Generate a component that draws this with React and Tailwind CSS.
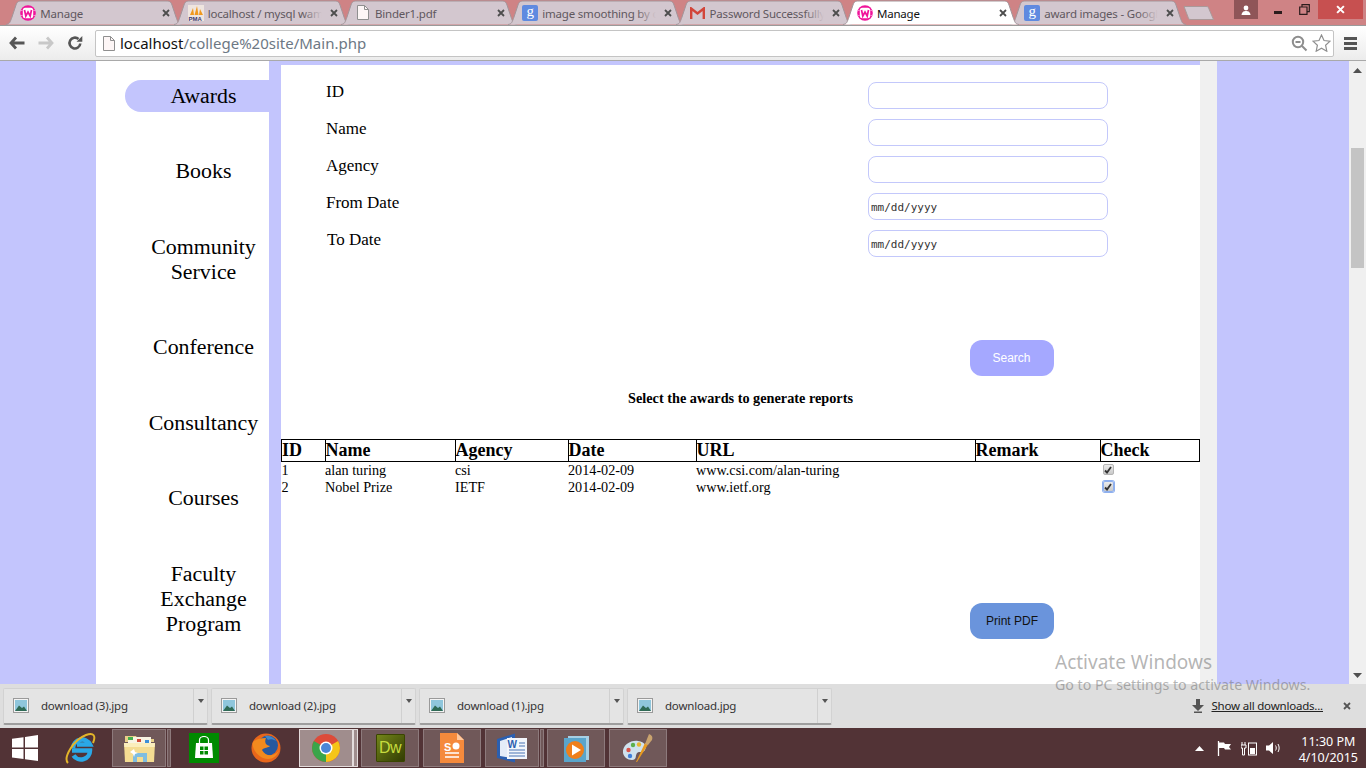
import React from "react";

const UI = "font-['Noto_Sans',sans-serif]";
const SERIF = "font-['Liberation_Serif',serif]";

function Wamp() {
  return (
    <svg width="16" height="16" viewBox="0 0 16 16" className="shrink-0">
      <circle cx="8" cy="8" r="7.800" fill="#f0149a" />
      <path d="M0 5.500h2.500M0 10.500h2.500M13.500 5.500H16M13.500 10.500H16" stroke="#f9a0d8" strokeWidth=".8" />
      <rect x="2.800" y="2.800" width="10.400" height="10.400" rx="2.500" fill="#fff" />
      <path d="M4.500 5 L5.800 11 L8 7 L10.200 11 L11.500 5" fill="none" stroke="#f0149a" strokeWidth="1.700" />
    </svg>
  );
}
function Pma() {
  return (
    <svg width="16" height="16" viewBox="0 0 16 16" className="shrink-0">
      <rect width="16" height="16" fill="#efe5df" />
      <path d="M2 10 L5 3 L6 10Z M6.500 10 L9 1 L10.500 10Z M11 10 L12 4 L15 10Z" fill="#f0991f" />
      <text x="0.500" y="15.500" fontSize="6" fontWeight="700" fill="#3a3a70" fontFamily="Liberation Sans">PMA</text>
    </svg>
  );
}
function Doc() {
  return (
    <svg width="12" height="15" viewBox="0 0 12 15" className="shrink-0">
      <path d="M.5.5h7l4 4v10H.5z" fill="#fdf6f6" stroke="#8f8f8f" />
      <path d="M7.500.5v4h4" fill="none" stroke="#8f8f8f" />
    </svg>
  );
}
function G() {
  return (
    <span className="w-4 h-4 shrink-0 rounded-[2px] bg-[#5f8ae0] text-white flex items-center justify-center text-[15px] leading-none pb-[2px] font-['Liberation_Serif',serif]">g</span>
  );
}
function Gmail() {
  return (
    <svg width="15" height="12" viewBox="0 0 15 12" className="shrink-0">
      <path d="M1.200 12V1.500L7.500 6.500 13.800 1.500V12" fill="none" stroke="#d2453a" strokeWidth="2.400" />
    </svg>
  );
}
function CloseX({ color = "#4d4d4d", size = 8 }) {
  return (
    <svg width={size} height={size} viewBox="0 0 8 8" className="shrink-0">
      <path d="M1 1l6 6M7 1L1 7" stroke={color} strokeWidth="1.800" />
    </svg>
  );
}

function Tab({ icon, title, active }) {
  return (
    <div className={`relative w-[167.330px] h-[25px] shrink-0 ${active ? "z-10" : ""}`}>
      <svg width="176" height="25" viewBox="0 0 176 25" className="absolute left-0 top-0">
        <path
          d="M0 24.500 C4 24 4 22 6 17 L10 5 C11 2 12 1 16 1 H160 C164 1 165 2 166 5 L170 17 C172 22 172 24 176 24.500"
          fill={active ? "#ffffff" : "#d3c7cf"}
          stroke="#a3959a"
          strokeWidth="1"
        />
      </svg>
      <div className="relative h-full flex items-center pl-[14px]">
        <div className="w-4 flex items-center justify-center shrink-0">{icon}</div>
        <div className="relative ml-[4px] -mt-[1px] w-[114px] h-[17px] leading-[16px] overflow-hidden whitespace-nowrap">
          <span className={`text-[11.500px] tracking-[-0.2px] ${UI} ${active ? "text-[#111]" : "text-[#5f575e]"}`}>{title}</span>
          {!active && <span className="absolute right-0 top-0 bottom-0 w-5 bg-gradient-to-r from-transparent to-[#d3c7cf]" />}
        </div>
        <div className="ml-[8px]"><CloseX /></div>
      </div>
    </div>
  );
}

function TabStrip() {
  return (
    <div className="relative h-[25px] bg-[#cf8385] flex items-start shrink-0">
      <div className="flex pl-[6.300px]">
        <Tab icon={<Wamp />} title="Manage" />
        <Tab icon={<Pma />} title="localhost / mysql wamp" />
        <Tab icon={<Doc />} title="Binder1.pdf" />
        <Tab icon={<G />} title="image smoothing by css" />
        <Tab icon={<Gmail />} title="Password Successfully" />
        <Tab icon={<Wamp />} title="Manage" active />
        <Tab icon={<G />} title="award images - Google" />
        <svg width="32" height="16" viewBox="0 0 32 16" className="ml-[5px] mt-[5px] shrink-0">
          <path d="M1 1.500 H23 C25 1.500 25.500 2 26 4 L30.500 14.500 H8 C6 14.500 5.500 14 5 12Z" fill="#d3c7cf" stroke="#a99" />
        </svg>
      </div>
      <div className="ml-auto flex items-start">
        <div className="w-[24px] h-[19px] bg-[#8f5558] flex items-center justify-center">
          <svg width="10" height="10" viewBox="0 0 10 10"><circle cx="5" cy="3" r="2.400" fill="#fff" /><path d="M0.500 10C1 6.500 3 6 5 6s4 .5 4.500 4z" fill="#fff" /></svg>
        </div>
        <div className="w-[40px] h-[19px] flex items-center justify-center pt-[5px]">
          <div className="w-2 h-[3px] bg-[#2c1c1c]" />
        </div>
        <div className="w-[12px] h-[19px] flex items-center justify-center">
          <svg width="11" height="11" viewBox="0 0 11 11"><path d="M3 2.500V.7h7.300v7H8.500M.7 3h7.300v7.300H.7z" fill="none" stroke="#2c1c1c" strokeWidth="1.200" /></svg>
        </div>
        <div className="w-[45px] h-[19px] ml-[8px] mr-[3px] bg-[#c75050] flex items-center justify-center">
          <CloseX color="#fff" size={9} />
        </div>
      </div>
    </div>
  );
}

function Toolbar() {
  return (
    <div className="h-[36px] shrink-0 flex items-center bg-gradient-to-b from-[#ffffff] to-[#ececec] border-t border-[#9a9a9a] border-b border-b-[#a9a9a9]">
      <div className="w-[95px] shrink-0 flex items-center pl-[9px]">
        <svg width="16" height="14" viewBox="0 0 16 14"><path d="M7 1.500 2 7l5 5.500M2.500 7H15.500" fill="none" stroke="#555" strokeWidth="2.800" /></svg>
        <svg width="16" height="14" viewBox="0 0 16 14" className="ml-[13px]"><path d="M9 1.500 14 7l-5 5.500M13.500 7H.5" fill="none" stroke="#c8c8c8" strokeWidth="2.800" /></svg>
        <svg width="16" height="16" viewBox="0 0 16 16" className="ml-[13px]"><path d="M13.300 8.500A5.400 5.400 0 1 1 11.500 4" fill="none" stroke="#555" strokeWidth="2.600" /><path d="M9.500 6.800H15.300V1z" fill="#555" /></svg>
      </div>
      <div className="w-[1239px] h-[27px] shrink-0 bg-white border border-[#c4c4c4] rounded-[2px] flex items-center pl-[7px] pr-[2px]">
        <Doc />
        <span className={`ml-[5px] text-[15px] ${UI}`}>
          <span className="text-[#111]">localhost</span><span className="text-[#6d7884]">/college%20site/Main.php</span>
        </span>
        <svg width="17" height="17" viewBox="0 0 17 17" className="ml-auto"><circle cx="7" cy="7" r="5.200" fill="none" stroke="#8e8e8e" strokeWidth="2" /><path d="M4.500 7h5M11 11l4.500 4.500" stroke="#8e8e8e" strokeWidth="2" /></svg>
        <svg width="19" height="18" viewBox="0 0 19 18" className="ml-[4px]"><path d="M9.500 1l2.500 5.500 6 .7-4.400 4 1.200 6-5.300-3-5.300 3 1.200-6L1 7.200l6-.7z" fill="#fff" stroke="#8e8e8e" strokeWidth="1.200" /></svg>
      </div>
      <div className="flex-1 flex flex-col items-center gap-[2px]">
        <div className="w-[13px] h-[3px] bg-[#555]" /><div className="w-[13px] h-[3px] bg-[#555]" /><div className="w-[13px] h-[3px] bg-[#555]" />
      </div>
    </div>
  );
}

function Sidebar() {
  const items = [["Community", "Service"], ["Conference"], ["Consultancy"], ["Courses"], ["Faculty", "Exchange", "Program"]];
  return (
    <div className={`w-[173px] shrink-0 bg-white pt-[22.500px] pl-[29px] ${SERIF} text-[21.900px] leading-[25px] text-black`}>
      <div className="flex flex-col gap-[50.500px] text-center">
        <div className="-my-[3.500px] py-[3.500px] pl-[13px] rounded-l-[16px] bg-[#c3c5fd]"><span className="block -mt-[1px] mb-[1px]">Awards</span></div>
        <div className="pl-[13px] -mt-[1px] mb-[1px]">Books</div>
        {items.map((lines) => (
          <div key={lines[0]} className="pl-[13px] -mt-[1px] mb-[1px]">
            {lines.map((l) => <div key={l}>{l}</div>)}
          </div>
        ))}
      </div>
    </div>
  );
}

const inputCls = "w-[240px] h-[27px] bg-white border border-[#c3c8fb] rounded-[8px] outline-none px-[2px] text-[11px] text-[#333] font-['DejaVu_Sans_Mono',monospace]";

function FormRow({ label, date, labelPad = "pl-[45px]" }) {
  return (
    <div className="flex items-start h-[27px]">
      <div className={`w-[587px] ${labelPad} text-[17px] leading-[20px] text-black`}>{label}</div>
      {date ? <input readOnly defaultValue="mm/dd/yyyy" className={`${inputCls} pt-[1px]`} /> : <input readOnly className={inputCls} />}
    </div>
  );
}

function Check({ focused }) {
  return (
    <span className={`w-[11px] h-[11px] flex items-center justify-center rounded-[2px] border bg-gradient-to-b from-[#ececec] to-[#c9c9c9] ${focused ? "border-[#8fb0ee] ring-1 ring-[#8fb0ee]" : "border-[#b5b5b5]"}`}>
      <svg width="8" height="8" viewBox="0 0 8 8"><path d="M1 4.500 3 6.500 7 1" fill="none" stroke="#333" strokeWidth="1.800" /></svg>
    </span>
  );
}

function DataTable() {
  const cols = ["w-[44px]", "w-[130px]", "w-[113px]", "w-[128px]", "w-[279px]", "w-[125px]", "w-[99px]"];
  const head = ["ID", "Name", "Agency", "Date", "URL", "Remark", "Check"];
  const rows = [
    ["1", "alan turing", "csi", "2014-02-09", "www.csi.com/alan-turing", "", false],
    ["2", "Nobel Prize", "IETF", "2014-02-09", "www.ietf.org", "", true],
  ];
  return (
    <table className="table-fixed w-[919px] border-collapse text-black">
      <colgroup>{cols.map((c, i) => <col key={i} className={c} />)}</colgroup>
      <thead>
        <tr>
          {head.map((h, i) => <th key={h} className={`border border-black text-left p-0 text-[18px] leading-[21px] font-bold ${i > 0 ? "indent-[-0.5px]" : ""}`}>{h}</th>)}
        </tr>
      </thead>
      <tbody>
        {rows.map((r) => (
          <tr key={r[0]} className="h-[17px]">
            {r.slice(0, 6).map((c, i) => <td key={i} className={`p-0 text-[14.200px] leading-[16px] ${i > 0 ? "indent-[-0.5px]" : ""}`}>{c}</td>)}
            <td className="p-0 pl-[2px] pb-[1px]"><Check focused={r[6]} /></td>
          </tr>
        ))}
      </tbody>
    </table>
  );
}

function Main() {
  return (
    <div className={`w-[919px] shrink-0 bg-white border-t-[4px] border-[#c3c5fd] rounded-t-[3px] ${SERIF}`}>
      <div className="pt-[17px] flex flex-col gap-[10px]">
        <FormRow label="ID" />
        <FormRow label="Name" />
        <FormRow label="Agency" />
        <FormRow label="From Date" date />
        <FormRow label="To Date" date labelPad="pl-[46px]" />
      </div>
      <div className="mt-[83px] pl-[689px]">
        <button className="w-[84px] h-[36px] rounded-[12px] bg-[#a5a8ff] text-white text-[12px] pr-[1px] font-['Liberation_Sans',sans-serif]">Search</button>
      </div>
      <div className="mt-[14px] text-center text-[14.250px] leading-[16px] font-bold text-black">Select the awards to generate reports</div>
      <div className="mt-[33px]"><DataTable /></div>
      <div className="mt-[107px] pl-[689px]">
        <button className="w-[84px] h-[36px] rounded-[12px] bg-[#6a94dc] text-[#111] text-[12px] font-['Liberation_Sans',sans-serif]">Print PDF</button>
      </div>
    </div>
  );
}

function Scrollbar() {
  return (
    <div className="w-[17px] shrink-0 bg-[#f0f0f0] flex flex-col items-center">
      <svg width="9" height="5" viewBox="0 0 9 5" className="mt-[7px]"><path d="M4.500 0 9 5H0z" fill="#505050" /></svg>
      <div className="w-[13px] h-[120px] mt-[75px] bg-[#c4c4c4]" />
      <svg width="9" height="5" viewBox="0 0 9 5" className="mt-auto mb-[6px]"><path d="M4.500 5 9 0H0z" fill="#505050" /></svg>
    </div>
  );
}

function Download({ name }) {
  return (
    <div className="w-[205px] h-[37px] shrink-0 flex items-stretch rounded-[2px] bg-[#e4e4e4] border border-[#d2d2d2] border-b-[#9e9e9e] border-b-2">
      <div className="flex-1 flex items-center pl-[9px]">
        <svg width="16" height="15" viewBox="0 0 16 15"><rect x=".5" y=".5" width="15" height="14" fill="#f4f4f4" stroke="#9a9a9a" /><rect x="2" y="2" width="12" height="11" fill="#8fc6dc" /><path d="M2 13 L6 7.500 9 10 11 8.500 14 13z" fill="#2f6a55" /></svg>
        <span className={`ml-[12px] text-[11.500px] tracking-[-0.2px] text-[#333] ${UI}`}>{name}</span>
      </div>
      <div className="w-[14px] border-l border-[#d0d0d0] flex justify-center pt-[10px]">
        <svg width="6" height="4" viewBox="0 0 6 4"><path d="M0 0h6L3 4z" fill="#555" /></svg>
      </div>
    </div>
  );
}

function DownloadBar() {
  return (
    <div className="h-[44px] shrink-0 bg-[#dedede] flex items-center pl-[3px] gap-[3px]">
      <Download name="download (3).jpg" />
      <Download name="download (2).jpg" />
      <Download name="download (1).jpg" />
      <Download name="download.jpg" />
      <div className="ml-auto flex items-center pr-[15px]">
        <svg width="12" height="14" viewBox="0 0 12 14"><path d="M4 0h4v6h4L6 12 0 6h4z" fill="#555" /><rect x="2" y="12.500" width="8" height="1.500" fill="#555" /></svg>
        <span className={`ml-[7px] text-[11.500px] tracking-[-0.2px] text-[#222] underline ${UI}`}>Show all downloads...</span>
        <span className="ml-[20px]"><CloseX color="#555" size={8} /></span>
      </div>
    </div>
  );
}

const Box = ({ w, children, stub }) => (
  <div className="flex h-[38px] shrink-0">
    <div className="h-full border border-[#8d7a7c] bg-[#705859] flex items-center justify-center" style={{ width: w }}>{children}</div>
    {stub && <div className="w-[4px] ml-[1px] h-full border border-[#8d7a7c] bg-[#705859]" />}
  </div>
);

function Taskbar() {
  return (
    <div className={`h-[40px] shrink-0 bg-[#523336] flex items-center pl-[12px] text-white ${UI}`}>
      <svg width="26" height="26" viewBox="0 0 26 26" className="shrink-0"><path d="M0 3.700 11.500 2.200V12.500H0zM13 2 26 0V12.500H13zM0 14H11.500V24L0 22.500zM13 14H26V26L13 24.200z" fill="#fff" /></svg>
      <svg width="32" height="34" viewBox="0 0 32 34" className="ml-[27px] shrink-0">
        <path d="M8 17a9 9 0 0 1 17-3.500H12M7 19.500h18a9 9 0 0 1-16.500 5" fill="none" stroke="#2aa8e6" strokeWidth="4.500" />
        <path d="M3 32C-2 27 8 9 21 4c8-3 10 1 7 8" fill="none" stroke="#e3b52a" strokeWidth="2" />
      </svg>
      <div className="ml-[15px]"><Box w={54} stub>
        <svg width="31" height="29" viewBox="0 0 31 29">
          <path d="M1 2h11l2 3h16v3H1z" fill="#e8cf87" />
          <rect x="4" y="3" width="23" height="7" fill="#f8f4e2" />
          <rect x="4" y="3" width="5" height="3" fill="#45b04d" />
          <rect x="13" y="5" width="4" height="3" fill="#d24a38" />
          <rect x="21" y="6" width="4" height="3" fill="#3d8fd8" />
          <path d="M0 9h31l-1 19H1z" fill="#f4dc92" />
          <path d="M0 9h31l-.3 4H.3z" fill="#fbeebc" />
          <path d="M9 28v-9h14v9h-4v-5h-6v5z" fill="#7fbde0" />
          <path d="M6 18l4-3 1 3 3 1-3 1-1 3-1-3z" fill="#fff" />
        </svg>
      </Box></div>
      <div className="ml-[18px] w-[30px] h-[30px] shrink-0 bg-[#008a00] flex items-center justify-center">
        <svg width="20" height="24" viewBox="0 0 20 24"><path d="M5.500 7V4a4.500 3.500 0 0 1 9 0v3" fill="none" stroke="#fff" strokeWidth="1.200" /><path d="M2 7h16l1 15H1z" fill="#fff" /><path d="M6 10.500h3.500V14H6zM10.500 10.500H14V14h-3.500zM6 15h3.500v3.500H6zM10.500 15H14v3.500h-3.500z" fill="#008a00" /></svg>
      </div>
      <svg width="30" height="30" viewBox="0 0 30 30" className="ml-[32px] shrink-0">
        <circle cx="15" cy="15" r="14.500" fill="#e8661b" />
        <circle cx="17" cy="12.500" r="10" fill="#27589f" />
        <path d="M14 3c4-1 9 1 11 5-3-2-6-2-8-1z" fill="#3f86c8" />
        <path d="M1.500 10C2 25 23 34 28.500 16 26 23 15 25 11 17c2-3 7-2 8-4-4-1-6-3-4-8C9 5 4 6 1.500 10z" fill="#f28a1e" />
      </svg>
      <div className="ml-[18px]"><div className="flex h-[38px] shrink-0">
        <div className="w-[54px] h-full border border-[#e4dcdc] bg-[#a08d8d] flex items-center justify-center">
          <svg width="30" height="30" viewBox="0 0 30 30">
            <circle cx="15" cy="15" r="14" fill="#dd4b39" />
            <path d="M15 15 L27.100 8 A14 14 0 0 1 15 29z" fill="#f5c518" />
            <path d="M15 15 L15 29 A14 14 0 0 1 2.900 8z" fill="#3aa54a" />
            <circle cx="15" cy="15" r="6.500" fill="#fff" /><circle cx="15" cy="15" r="5" fill="#4a86d8" />
          </svg>
        </div>
        <div className="w-[5px] h-full border border-[#e4dcdc] bg-[#a08d8d]" />
      </div></div>
      <div className="ml-[3px]"><Box w={58}>
        <div className="w-[29px] h-[28px] rounded-[1px] border border-[#3a4500] bg-gradient-to-br from-[#74861a] to-[#333d04] flex items-center justify-center text-[16px] tracking-[-0.5px] text-[#c6db3e] font-['Liberation_Sans',sans-serif]">Dw</div>
      </Box></div>
      <div className="ml-[4px]"><Box w={58}>
        <svg width="24" height="30" viewBox="0 0 24 30"><path d="M0 0h17l7 7v23H0z" fill="#f58a3c" /><path d="M17 0l7 7h-7z" fill="#ffc79c" /><path d="M5 20h14M5 24h14" stroke="#fff" strokeWidth="1.500" /><circle cx="16" cy="13" r="3.500" fill="#fff" /><text x="4" y="17.500" fontSize="11" fontWeight="700" fill="#fff" fontFamily="Liberation Sans">S</text></svg>
      </Box></div>
      <div className="ml-[4px]"><Box w={54} stub>
        <svg width="32" height="30" viewBox="0 0 32 30"><path d="M1 6 19 .5v29L1 25z" fill="#2b5fb0" /><path d="M4 8 16 4v21L4 23z" fill="#e4ecf8" /><rect x="11" y="5" width="20" height="21" fill="#f3f6fb" /><path d="M23 10h6M23 13h6M13 17h16M13 20h16M13 23h16" stroke="#4a75b5" strokeWidth="1.200" /><text x="11.500" y="15" fontSize="10" fontWeight="700" fill="#2b5fb0" fontFamily="Liberation Sans">W</text></svg>
      </Box></div>
      <div className="ml-[3px]"><Box w={58}>
        <svg width="27" height="27" viewBox="0 0 27 27"><rect x="5" y="1" width="21" height="24" fill="#a6cfe4" /><rect x="1" y="3" width="22" height="24" fill="#5aa5cb" /><circle cx="12" cy="15" r="9" fill="#ef7f1a" /><path d="M9 9.500 18 15l-9 5.500z" fill="#fff" /></svg>
      </Box></div>
      <div className="ml-[4px]"><Box w={58}>
        <svg width="32" height="30" viewBox="0 0 32 30"><path d="M1 20C0 12 9 7 16 8c7 1 9 5 7 9-2 3-6 1-8 3-2 3 0 7-5 7-5 0-8-3-9-7z" fill="#cfe2ee" /><circle cx="6.500" cy="17" r="2.200" fill="#d9534a" /><circle cx="11" cy="12" r="2.200" fill="#5cb04d" /><circle cx="17" cy="11.500" r="2.200" fill="#e8b530" /><circle cx="8" cy="23" r="2.200" fill="#3f7fd9" /><path d="M14 29 23 10l3 1.500L15 29z" fill="#e89a1f" /><path d="M23 11 27 1c3 1 4 3 3 6l-4 5z" fill="#c9a36e" /></svg>
      </Box></div>
      <div className="ml-auto flex items-center pr-[8px]">
        <svg width="9" height="5" viewBox="0 0 9 5"><path d="M4.500 0 9 5H0z" fill="#fff" /></svg>
        <svg width="15" height="15" viewBox="0 0 15 15" className="ml-[13px]"><path d="M1.500 0v15" stroke="#fff" strokeWidth="1.300" /><path d="M2 1.500h5l1 1.500h6l-2 3 2 2.500H8l-1-1.500H2z" fill="#fff" /></svg>
        <svg width="16" height="15" viewBox="0 0 16 15" className="ml-[9px]"><path d="M1 1v3M4 1v3M0 4h5v3H3.500v7h-2V7H0z" fill="none" stroke="#fff" /><rect x="7.500" y="2" width="8" height="12" fill="none" stroke="#fff" /><rect x="9" y="7" width="5" height="6" fill="#fff" /></svg>
        <svg width="15" height="14" viewBox="0 0 15 14" className="ml-[9px]"><path d="M0 4.500h3L7 1v12L3 9.500H0z" fill="#fff" /><path d="M9.500 4.500c1 1.500 1 3.500 0 5M12 3c1.500 2.500 1.500 5.500 0 8" fill="none" stroke="#fff" /></svg>
        <div className="ml-[18px] text-center text-[12.500px] leading-[16px] pt-[3px]">
          <div>11:30 PM</div>
          <div>4/10/2015</div>
        </div>
      </div>
    </div>
  );
}

export default function App() {
  return (
    <div className="relative w-[1366px] h-[768px] overflow-hidden flex flex-col bg-white">
      <TabStrip />
      <Toolbar />
      <div className="h-[623px] min-h-0 shrink-0 flex bg-[#c3c5fd] overflow-hidden">
        <div className="w-[96px] shrink-0" />
        <Sidebar />
        <div className="w-[12px] shrink-0" />
        <Main />
        <div className="w-[17px] shrink-0 bg-[#f0f0f0]" />
        <div className="w-[132px] shrink-0" />
        <Scrollbar />
      </div>
      <DownloadBar />
      <Taskbar />
      <div className={`absolute left-[1055px] top-[650px] pointer-events-none text-[#6b6b6b]/50 whitespace-nowrap ${UI}`}>
        <div className="text-[19px] leading-[25px]">Activate Windows</div>
        <div className="text-[14.200px] leading-[20px]">Go to PC settings to activate Windows.</div>
      </div>
    </div>
  );
}
